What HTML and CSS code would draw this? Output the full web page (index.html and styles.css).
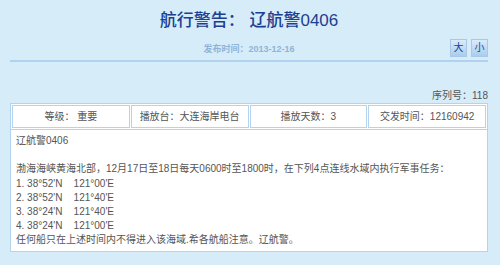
FILE: index.html
```html
<!DOCTYPE html>
<html lang="zh-CN">
<head>
    <meta charset="UTF-8">
    <title>航行警告：辽航警0406</title>
    <link rel="stylesheet" href="styles.css">
</head>
<body>
    <div class="page">
        <h1 class="title">航行警告： 辽航警0406</h1>
        <div class="meta">
            <span class="date">发布时间：2013-12-16</span>
            <div class="size-btns">
                <span class="btn">大</span>
                <span class="btn">小</span>
            </div>
        </div>
        <div class="serial">序列号：118</div>
        <div class="info">
            <div class="cell">等级： 重要</div>
            <div class="cell">播放台：大连海岸电台</div>
            <div class="cell">播放天数：3</div>
            <div class="cell">交发时间：12160942</div>
        </div>
        <div class="content">
            辽航警0406<br>
            <br>
            渤海海峡黄海北部，12月17日至18日每天0600时至1800时，在下列4点连线水域内执行军事任务：<br>
            1. 38°52'N&nbsp;&nbsp;&nbsp;&nbsp;121°00'E<br>
            2. 38°52'N&nbsp;&nbsp;&nbsp;&nbsp;121°40'E<br>
            3. 38°24'N&nbsp;&nbsp;&nbsp;&nbsp;121°40'E<br>
            4. 38°24'N&nbsp;&nbsp;&nbsp;&nbsp;121°00'E<br>
            任何船只在上述时间内不得进入该海域.希各航船注意。辽航警。
        </div>
    </div>
</body>
</html>
```

FILE: styles.css
```css
/* 航行警告详情页 */
body {
    margin: 0;
    background-color: #d6ecf9;
    font-family: "Liberation Sans", "Noto Sans CJK SC", sans-serif;
    font-size: 10px;
    color: #555;
}
.page {
    width: 478px;
    margin-left: 10px;
}
.title {
    margin: 0;
    padding-top: 8px;
    height: 25px;
    font-size: 17px;
    font-weight: 500;
    line-height: 25px;
    text-align: center;
    color: #1c3f91;
}
.meta {
    position: relative;
    height: 27px;
    border-bottom: 2px solid #aed2f0;
}
.date {
    display: block;
    padding-top: 9px;
    text-align: center;
    font-size: 9px;
    font-weight: bold;
    color: #90b4d6;
}
.size-btns {
    position: absolute;
    right: 0;
    top: 6px;
    display: flex;
    gap: 4px;
}
.btn {
    width: 15px;
    height: 16px;
    line-height: 16px;
    text-align: center;
    font-size: 10px;
    color: #1c3f91;
    border: 1px solid #a9c8e6;
    background: linear-gradient(#d9ebfa, #a9cdef);
}
.serial {
    margin-top: 25px;
    height: 16px;
    text-align: right;
}
.info {
    display: flex;
    gap: 1px;
    background: #fff;
    border: 1px solid #b3d3ee;
    padding: 1px;
}
.cell {
    flex: 1;
    height: 21px;
    line-height: 21px;
    text-align: center;
    border: 1px solid #b3d3ee;
}
.content {
    background: #fff;
    border: 1px solid #b3d3ee;
    border-top: none;
    padding: 4px 5px 3px;
    line-height: 14.2px;
}
```
